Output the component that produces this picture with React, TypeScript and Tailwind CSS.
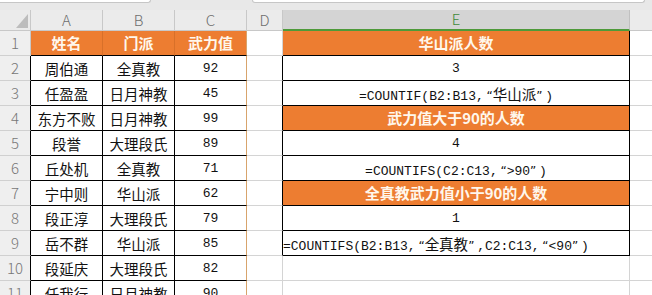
import React from "react";

const ORANGE = "bg-[#ed7d31]";

const people: [string, string, string][] = [
  ["周伯通", "全真教", "92"],
  ["任盈盈", "日月神教", "45"],
  ["东方不败", "日月神教", "99"],
  ["段誉", "大理段氏", "89"],
  ["丘处机", "全真教", "71"],
  ["宁中则", "华山派", "62"],
  ["段正淳", "大理段氏", "79"],
  ["岳不群", "华山派", "85"],
  ["段延庆", "大理段氏", "82"],
  ["任我行", "日月神教", "90"],
];

// split a formula into ascii / cjk / quote runs so each gets its own font
function Formula({ text }: { text: string }) {
  const parts: { kind: "a" | "c" | "q"; s: string }[] = [];
  for (const ch of text) {
    const kind = ch === "“" || ch === "”" ? "q" : ch.charCodeAt(0) > 0x2e80 ? "c" : "a";
    const last = parts[parts.length - 1];
    if (last && last.kind === kind && kind !== "q") last.s += ch;
    else parts.push({ kind, s: ch });
  }
  return (
    <span className="whitespace-nowrap">
      {parts.map((p, i) =>
        p.kind === "a" ? (
          <span key={i} className="font-['Liberation_Mono',monospace] text-[13px]">
            {p.s}
          </span>
        ) : p.kind === "c" ? (
          <span key={i} className="font-['Noto_Sans_CJK_SC',sans-serif] text-[14.5px]">
            {p.s}
          </span>
        ) : (
          <span
            key={i}
            className={`inline-block w-[9px] font-['DejaVu_Sans',sans-serif] text-[12px] ${
              p.s === "“" ? "text-right" : "text-left"
            }`}
          >
            {p.s}
          </span>
        )
      )}
    </span>
  );
}

function ECell({ row }: { row: number }) {
  const base = "w-[347px] shrink-0 h-full flex items-center border-b";
  if (row === 1 || row === 4 || row === 7) {
    const label = row === 1 ? "华山派人数" : row === 4 ? "武力值大于90的人数" : "全真教武力值小于90的人数";
    return (
      <div className={`${base} ${ORANGE} justify-center border-r border-r-black border-b-black text-[15px] font-bold text-[#fff7ec] pt-[1px]`}>
        {label}
      </div>
    );
  }
  if (row === 2 || row === 5 || row === 8) {
    const v = row === 2 ? "3" : row === 5 ? "4" : "1";
    return (
      <div className={`${base} justify-center border-r border-r-black border-b-black font-['Liberation_Mono',monospace] text-[13px] pt-[2px]`}>
        {v}
      </div>
    );
  }
  if (row === 3)
    return (
      <div className={`${base} justify-center border-r border-r-black border-b-black pt-[1px]`}>
        <Formula text="=COUNTIF(B2:B13,“华山派”)" />
      </div>
    );
  if (row === 6)
    return (
      <div className={`${base} justify-center border-r border-r-black border-b-black pt-[1px]`}>
        <Formula text="=COUNTIFS(C2:C13,“>90”)" />
      </div>
    );
  if (row === 9)
    return (
      <div className={`${base} justify-start border-r border-r-black border-b-black pt-[1px]`}>
        <Formula text="=COUNTIFS(B2:B13,“全真教”,C2:C13,“<90”)" />
      </div>
    );
  return <div className={`${base} border-r border-r-[#d4d4d4] border-b-[#d4d4d4]`} />;
}

function Row({ row }: { row: number }) {
  const head = row === 1;
  const p = people[row - 2];
  const inE = row >= 2 && row <= 9;
  const cell = "shrink-0 h-full flex items-center justify-center border-b";
  return (
    <div className="flex h-[25px]">
      <div
        className={`w-[31px] shrink-0 h-full flex items-center justify-center bg-[#efefef] border-b border-b-[#d0d0d0] border-r font-['Noto_Sans_CJK_SC',sans-serif] font-light text-[15px] text-[#777] ${
          head ? "border-r-[#c8c8c8]" : "border-r-black"
        }`}
      >
        {row}
      </div>
      {head ? (
        <>
          <div className={`${cell} w-[72px] ${ORANGE} border-b-black border-r border-r-[#d87029] text-[15px] font-bold text-[#fff7ec] pt-[1px]`}>姓名</div>
          <div className={`${cell} w-[72px] ${ORANGE} border-b-black border-r border-r-[#d87029] text-[15px] font-bold text-[#fff7ec] pt-[1px]`}>门派</div>
          <div className={`${cell} w-[72px] ${ORANGE} border-b-black border-r border-r-[#d8a46c] text-[15px] font-bold text-[#fff7ec] pt-[1px]`}>武力值</div>
        </>
      ) : (
        <>
          <div className={`${cell} w-[72px] border-b-black border-r border-r-black text-[14.5px] pt-[1px]`}>{p?.[0]}</div>
          <div className={`${cell} w-[72px] border-b-black border-r border-r-black text-[14.5px] pt-[1px]`}>{p?.[1]}</div>
          <div className={`${cell} w-[72px] border-b-black border-r border-r-[#d8a46c] font-['Liberation_Mono',monospace] text-[13px] pt-[2px]`}>{p?.[2]}</div>
        </>
      )}
      <div className={`${cell} w-[36px] border-b-[#d4d4d4] border-r ${inE ? "border-r-black" : "border-r-[#d4d4d4]"}`} />
      <ECell row={row} />
      <div className="flex-1 h-full border-b border-b-[#d4d4d4]" />
    </div>
  );
}

export default function App() {
  const cols: [string, string][] = [
    ["A", "w-[72px]"],
    ["B", "w-[72px]"],
    ["C", "w-[72px]"],
    ["D", "w-[36px]"],
  ];
  return (
    <div className="w-[652px] h-[295px] overflow-hidden bg-white text-[#111] font-['Noto_Sans_CJK_SC',sans-serif]">
      {/* formula bar bottom edge */}
      <div className="h-[10px] bg-[#e8e8e8] flex">
        <div className="w-[151px] h-[3px] bg-white border-b border-r border-[#c6c6c6] rounded-br-[3px]" />
        <div className="ml-[101px] w-[393px] h-[3px] bg-white border-b border-x border-[#c6c6c6] rounded-b-[3px]" />
      </div>
      {/* column headers */}
      <div className="flex h-[21px] bg-[#ebebeb] font-light text-[15px] text-[#6e6e6e]">
        <div className="w-[31px] shrink-0 h-full border-r border-b border-[#c8c8c8] flex items-end justify-end pr-[2px] pb-[2px]">
          <svg width="12" height="14" viewBox="0 0 12 14">
            <polygon points="12,0 12,14 0,14" fill="#bdbdbd" />
          </svg>
        </div>
        {cols.map(([c, w]) => (
          <div key={c} className={`${w} shrink-0 h-full border-r border-b border-[#c8c8c8] flex items-center justify-center`}>
            {c}
          </div>
        ))}
        <div className="w-[347px] shrink-0 h-full bg-[#d4d4d4] border-r border-r-[#c0c0c0] border-b-2 border-b-[#4e9a3a] flex items-center justify-center text-[#3f8a3a]">
          E
        </div>
        <div className="flex-1 h-full border-b border-[#c8c8c8]" />
      </div>
      {Array.from({ length: 11 }, (_, i) => (
        <Row key={i} row={i + 1} />
      ))}
    </div>
  );
}
